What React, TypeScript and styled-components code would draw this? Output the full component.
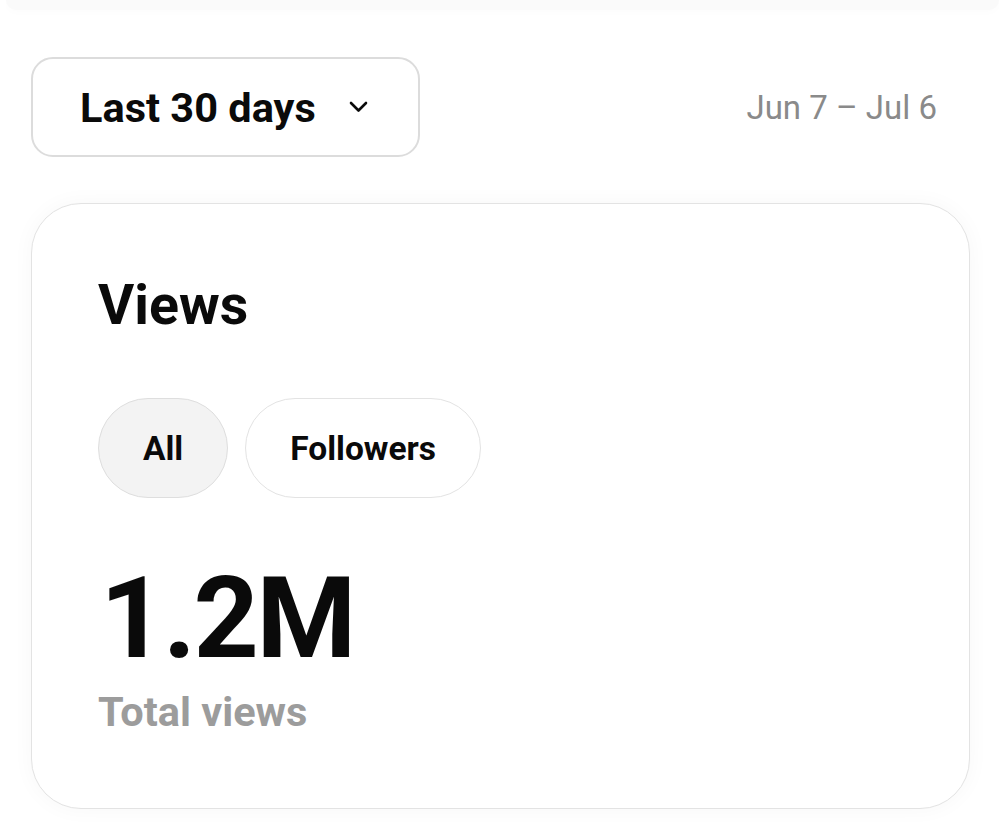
import React from "react";
import styled, { createGlobalStyle } from "styled-components";

const Global = createGlobalStyle`
  html, body { margin: 0; padding: 0; background: #ffffff; }
  body { font-family: Roboto, "Noto Sans", Arial, sans-serif; color: #0a0a0a; }
  * { box-sizing: border-box; }
`;

const Page = styled.div`
  width: 1005px;
  height: 837px;
  overflow: hidden;
  display: flex;
  flex-direction: column;
  background: #fff;
`;

const TopStrip = styled.div`
  height: 10px;
  margin: 0 6px;
  background: #fafafa;
  border-radius: 0 0 14px 14px;
  box-shadow: 0 2px 8px rgba(0, 0, 0, 0.015);
`;

const Content = styled.div`
  padding: 47px 35px 0 31px;
  display: flex;
  flex-direction: column;
  gap: 46px;
`;

const Header = styled.div`
  display: flex;
  align-items: center;
  justify-content: space-between;
  height: 100px;
`;

const RangeButton = styled.button`
  height: 100px;
  padding: 0 50px 0 47px;
  display: flex;
  align-items: center;
  gap: 33px;
  border: 2px solid #dcdcdc;
  border-radius: 22px;
  background: #fff;
  font-family: Roboto, Arial, sans-serif;
  font-size: 41.5px;
  font-weight: 700;
  color: #0a0a0a;
`;

const DateRange = styled.span`
  margin-right: 33px;
  font-size: 33px;
  font-weight: 400;
  color: #8a8a8a;
`;

const Card = styled.section`
  border: 1.5px solid #e3e3e3;
  border-radius: 50px;
  padding: 70px 68px 72px 67px;
  background: #fff;
  box-shadow: 0 0 22px rgba(0, 0, 0, 0.035);
  display: flex;
  flex-direction: column;
  align-items: flex-start;
`;

const Title = styled.h2`
  margin: 0;
  margin-left: -1px;
  font-size: 55.5px;
  line-height: 63px;
  font-weight: 700;
  color: #0a0a0a;
`;

const Chips = styled.div`
  display: flex;
  gap: 17px;
  margin-top: 61px;
  margin-left: -1px;
`;

const Chip = styled.button<{ $active?: boolean }>`
  height: 100px;
  padding: 0 44px;
  border-radius: 50px;
  border: 1.5px solid ${(p) => (p.$active ? "#dedede" : "#e3e3e3")};
  background: ${(p) => (p.$active ? "#f3f3f3" : "#ffffff")};
  font-family: Roboto, Arial, sans-serif;
  font-size: 33.5px;
  font-weight: 700;
  color: #0a0a0a;
`;

const BigNumber = styled.div`
  margin-top: 63px;
  margin-left: 1px;
  font-size: 114px;
  line-height: 114px;
  font-weight: 700;
  color: #0a0a0a;
  letter-spacing: -2.5px;
`;

const Caption = styled.div`
  margin-top: 13px;
  margin-left: -1px;
  font-size: 41.5px;
  line-height: 48px;
  font-weight: 700;
  color: #9c9c9c;
`;

const Chevron = () => (
  <svg width="19" height="12" viewBox="0 0 19 12" fill="none">
    <path d="M2 2 L9.5 9.5 L17 2" stroke="#0a0a0a" strokeWidth="2.6" strokeLinecap="round" strokeLinejoin="round" />
  </svg>
);

export default function App() {
  return (
    <Page>
      <Global />
      <TopStrip />
      <Content>
        <Header>
          <RangeButton>
            Last 30 days
            <Chevron />
          </RangeButton>
          <DateRange>Jun 7 – Jul 6</DateRange>
        </Header>
        <Card>
          <Title>Views</Title>
          <Chips>
            <Chip $active>All</Chip>
            <Chip>Followers</Chip>
          </Chips>
          <BigNumber>1.2M</BigNumber>
          <Caption>Total views</Caption>
        </Card>
      </Content>
    </Page>
  );
}
